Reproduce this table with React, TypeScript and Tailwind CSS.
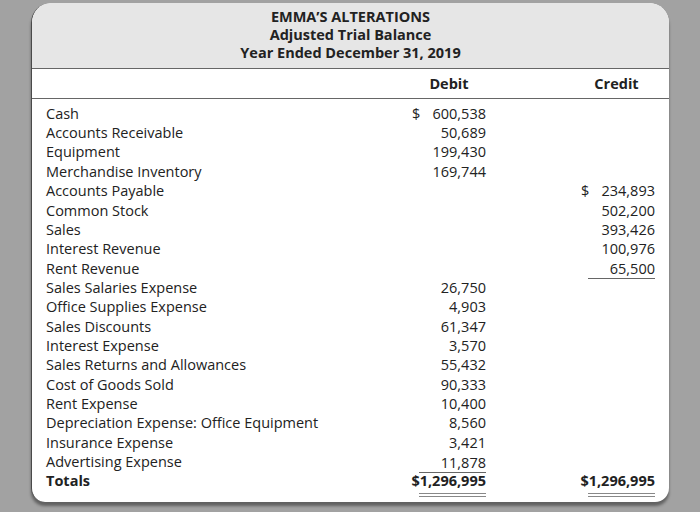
const rows: { label: string; debit?: string; credit?: string; dollar?: boolean; rule?: boolean }[] = [
  { label: "Cash", debit: "600,538", dollar: true },
  { label: "Accounts Receivable", debit: "50,689" },
  { label: "Equipment", debit: "199,430" },
  { label: "Merchandise Inventory", debit: "169,744" },
  { label: "Accounts Payable", credit: "234,893", dollar: true },
  { label: "Common Stock", credit: "502,200" },
  { label: "Sales", credit: "393,426" },
  { label: "Interest Revenue", credit: "100,976" },
  { label: "Rent Revenue", credit: "65,500", rule: true },
  { label: "Sales Salaries Expense", debit: "26,750" },
  { label: "Office Supplies Expense", debit: "4,903" },
  { label: "Sales Discounts", debit: "61,347" },
  { label: "Interest Expense", debit: "3,570" },
  { label: "Sales Returns and Allowances", debit: "55,432" },
  { label: "Cost of Goods Sold", debit: "90,333" },
  { label: "Rent Expense", debit: "10,400" },
  { label: "Depreciation Expense: Office Equipment", debit: "8,560" },
  { label: "Insurance Expense", debit: "3,421" },
  { label: "Advertising Expense", debit: "11,878", rule: true },
];

function Amount({ value, dollar, rule }: { value?: string; dollar?: boolean; rule?: boolean }) {
  return (
    <div className="w-[74px] flex justify-between items-center">
      <span>{dollar ? "$" : ""}</span>
      {value && (
        <span className={rule ? "w-[67px] text-right border-b border-[#666] leading-[19px] mt-[2px]" : "text-right"}>{value}</span>
      )}
    </div>
  );
}

export default function App() {
  return (
    <div className="w-[700px] h-[512px] bg-[#a2a2a2] pt-[3px] pl-[31px] overflow-hidden font-['Open_Sans',sans-serif] text-[#222]">
      <div className="w-[638px] h-[499px] bg-white rounded-t-[20px] rounded-b-[14px] overflow-hidden border-l border-[#4a4a4a] shadow-[0_4px_3px_rgba(0,0,0,0.4)]">
        {/* title block */}
        <div className="h-[66px] bg-[#e6e6e6] border-b border-[#666] pt-[5px] text-center font-bold text-[14.5px] leading-[18px]">
          <div>EMMA’S ALTERATIONS</div>
          <div>Adjusted Trial Balance</div>
          <div>Year Ended December 31, 2019</div>
        </div>

        <div className="h-[30px] border-b border-[#666] flex items-center px-[14px] font-bold text-[14.5px]">
          <div className="flex-1" />
          <div className="w-[74px] text-center">Debit</div>
          <div className="w-[95px]" />
          <div className="w-[74px] text-center pr-[3px]">Credit</div>
        </div>

        <div className="pt-[5px] px-[14px] text-[14.5px]">
          {rows.map((r) => (
            <div key={r.label} className="flex h-[19.35px] items-center">
              <div className="flex-1">{r.label}</div>
              <Amount value={r.debit} dollar={r.dollar && !!r.debit} rule={r.rule && !!r.debit} />
              <div className="w-[95px]" />
              <Amount value={r.credit} dollar={r.dollar && !!r.credit} rule={r.rule && !!r.credit} />
            </div>
          ))}
          <div className="flex h-[19.35px] items-center font-bold">
            <div className="flex-1">Totals</div>
            <div className="w-[74px] flex justify-end whitespace-nowrap">
              <span>$1,296,995</span>
            </div>
            <div className="w-[95px]" />
            <div className="w-[74px] flex justify-end whitespace-nowrap">
              <span>$1,296,995</span>
            </div>
          </div>
          <div className="flex">
            <div className="flex-1" />
            <div className="w-[74px] flex justify-end pt-[2px]">
              <div className="w-[67px] border-b-[4px] border-double border-[#888]" />
            </div>
            <div className="w-[95px]" />
            <div className="w-[74px] flex justify-end pt-[2px]">
              <div className="w-[67px] border-b-[4px] border-double border-[#888]" />
            </div>
          </div>
        </div>
      </div>
    </div>
  );
}
